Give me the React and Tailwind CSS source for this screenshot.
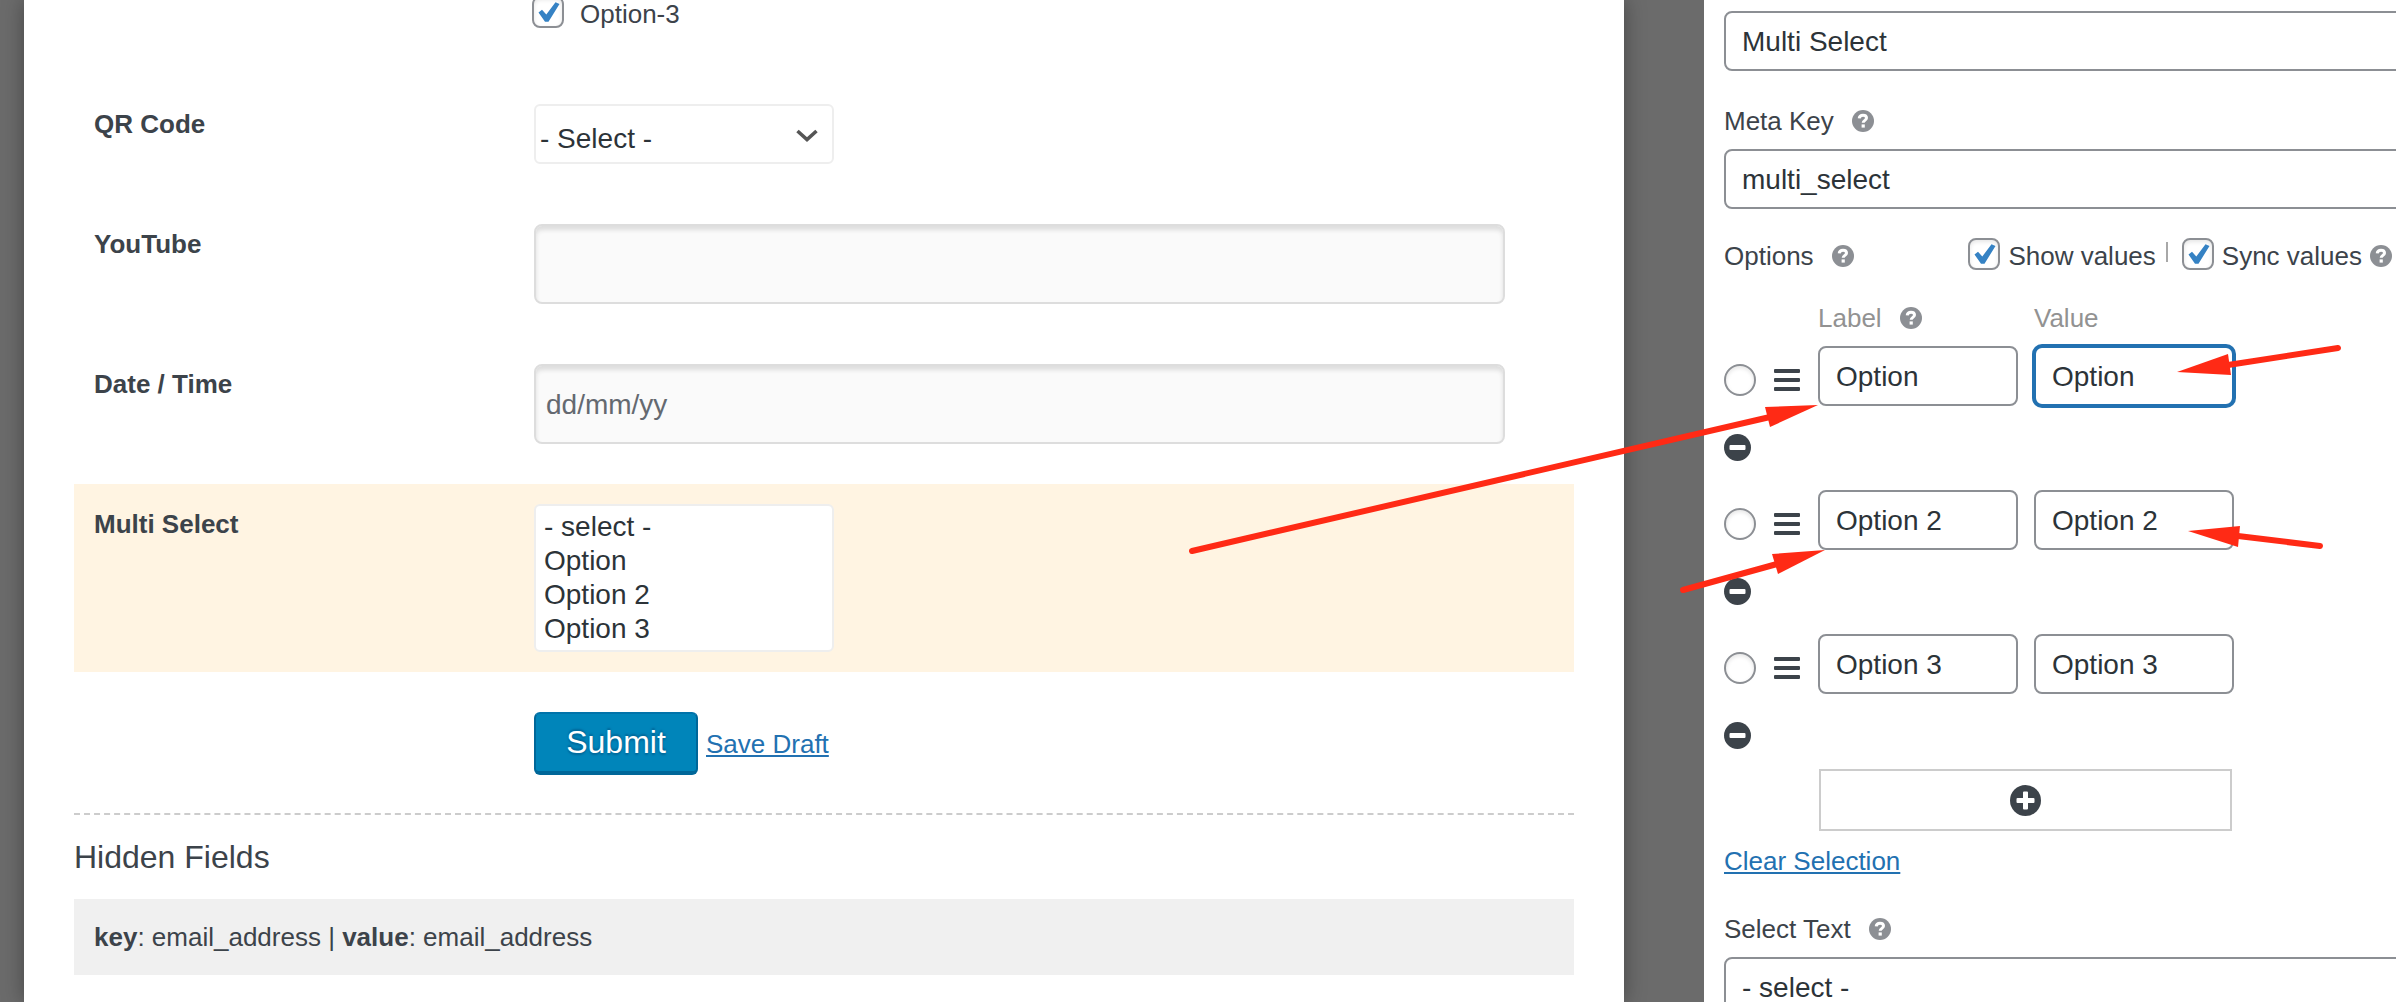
const text = 'text-[26px] leading-8 text-[#3c434a]';
const box = 'h-[60px] rounded-lg border-2 bg-white px-4 pt-0.5 text-[28px] text-[#2c3338]';

function HelpIcon() {
  return (
    <svg viewBox="0 0 22 22" className="h-[22px] w-[22px] shrink-0" fill="none">
      <circle cx="11" cy="11" r="11" fill="#8c8f94" />
      <path d="M7.2 8.4C7.4 6.4 8.8 5.2 11 5.2s3.500 1.200 3.500 2.900c0 2.300-3.300 2.300-3.300 4.700" stroke="#fff" strokeWidth="3" />
      <rect x="9.600" y="14.400" width="3.200" height="3.200" fill="#fff" />
    </svg>
  );
}

function Tick({ id }) {
  return (
    <span className="relative block h-8 w-8 shrink-0">
      <input
        id={id}
        type="checkbox"
        defaultChecked
        className="block h-8 w-8 appearance-none rounded-lg border-2 border-[#8c8f94] bg-white shadow-[inset_0_2px_4px_rgba(0,0,0,0.1)]"
      />
      <svg viewBox="0 0 32 32" className="pointer-events-none absolute inset-0" fill="#3582c4">
        <path d="M6.500 16.500 10 13.700 14.300 18.500 23.500 6.300 27.500 8 16.500 25.700H13Z" />
      </svg>
    </span>
  );
}

function Field({ label, id, className = '', children }) {
  return (
    <div className={`flex items-start px-5 py-5 ${className}`}>
      <label htmlFor={id} className="w-[440px] shrink-0 pt-1 text-[26px] leading-8 font-bold text-[#3c434a]">
        {label}
      </label>
      <div className="min-w-0 flex-1">{children}</div>
    </div>
  );
}

const plain =
  'block h-20 w-[971px] max-w-full rounded-lg border-2 border-[#ddd] bg-[#fafafa] px-2.5 pt-0.5 text-[28px] text-[#2c3338] placeholder:text-[#646970] shadow-[inset_0_4px_4px_#ddd]';

function FormPreview() {
  return (
    <main className="min-w-0 flex-1 bg-white px-[50px] shadow-[0_0_20px_rgba(0,0,0,0.35)]">
      <div className="flex h-7 items-end pl-[458px]">
        <Tick id="option-3" />
        <label htmlFor="option-3" className="pl-4 text-[26px] leading-7 text-[#3c434a]">Option-3</label>
      </div>

      <Field label="QR Code" id="qr" className="mt-14">
        <span className="relative block w-[300px]">
          <select
            id="qr"
            className="block h-[60px] w-full appearance-none rounded-md border-2 border-[#eee] bg-white px-1 pt-2.5 text-[28px] text-[#2c3338]"
          >
            <option>- Select -</option>
          </select>
          <svg viewBox="0 0 22 14" className="pointer-events-none absolute top-[25px] right-4 h-3.5 w-[22px]" fill="none" stroke="#555" strokeWidth="3.600">
            <path d="M1.500 2 11 10.500 20.500 2" />
          </svg>
        </span>
      </Field>
      <Field label="YouTube" id="youtube" className="mt-5">
        <input id="youtube" type="text" className={plain} />
      </Field>
      <Field label="Date / Time" id="date" className="mt-5">
        <input id="date" type="text" placeholder="dd/mm/yy" className={plain} />
      </Field>
      <Field label="Multi Select" id="multi" className="mt-5 bg-[#fff4e2]">
        <select
          id="multi"
          multiple
          size={4}
          className="block h-[148px] w-[300px] overflow-hidden rounded-md border-2 border-[#eee] bg-white px-2 pt-[5px] text-[28px] leading-8 text-[#2c3338]"
        >
          <option className="h-[34px]">- select -</option>
          <option className="h-[34px]">Option</option>
          <option className="h-[34px]">Option 2</option>
          <option className="h-[34px]">Option 3</option>
        </select>
      </Field>

      <div className="flex items-center gap-2 pt-10 pb-[38px] pl-[460px]">
        <button
          type="button"
          className="h-[63px] w-[164px] rounded-md border-2 border-b-4 border-[#006799] border-t-[#0073aa] bg-[#0085ba] pb-0.5 text-[32px] text-white [text-shadow:0_-2px_2px_#006799,0_2px_2px_#006799]"
        >
          Submit
        </button>
        <a href="#draft" className="text-[26px] leading-8 text-[#2271b1] underline decoration-2 underline-offset-2">Save Draft</a>
      </div>

      <section className="border-t-2 border-dashed border-[#ccc]">
        <h2 className="pt-6 text-[32px] leading-9 text-[#3c434a]">Hidden Fields</h2>
        <p className="mt-6 mb-10 bg-[#f0f0f0] px-5 py-[22px] text-[26px] leading-8 text-[#3c434a]">
          <b>key</b>: email_address | <b>value</b>: email_address
        </p>
      </section>
    </main>
  );
}

function OptionRow({ name, focused }) {
  return (
    <div className="mb-[29px]">
      <div className="flex items-center">
        <input
          type="radio"
          name="default"
          aria-label={`Default ${name}`}
          className="mt-2 h-8 w-8 appearance-none rounded-full border-2 border-[#8c8f94] bg-white shadow-[inset_0_2px_4px_rgba(0,0,0,0.1)]"
        />
        <svg viewBox="0 0 26 22" className="mt-2 ml-[18px] h-[22px] w-[26px]" fill="#3c434a">
          <rect width="26" height="4" rx="1" />
          <rect y="9" width="26" height="4" rx="1" />
          <rect y="18" width="26" height="4" rx="1" />
        </svg>
        <input aria-label={`${name} label`} defaultValue={name} className={`ml-[18px] w-[200px] border-[#8c8f94] ${box}`} />
        <input
          aria-label={`${name} value`}
          defaultValue={name}
          className={`ml-4 w-[200px] ${box} ${focused ? 'border-[#2271b1] ring-2 ring-[#2271b1]' : 'border-[#8c8f94]'}`}
        />
      </div>
      <button type="button" aria-label={`Remove ${name}`} className="mt-7 block">
        <svg viewBox="0 0 27 27" className="h-[27px] w-[27px]">
          <circle cx="13.500" cy="13.500" r="13.500" fill="#3c434a" />
          <rect x="5.500" y="11" width="16" height="5" rx="1" fill="#fff" />
        </svg>
      </button>
    </div>
  );
}

function FieldSettings() {
  return (
    <aside className="w-[692px] shrink-0 overflow-hidden bg-white pl-5">
      <div className="-mr-10 pt-[11px]">
        <input aria-label="Label" defaultValue="Multi Select" className={`block w-full border-[#8c8f94] ${box}`} />

        <div className="mt-[34px] mb-3 flex items-center gap-[18px]">
          <label htmlFor="meta" className={text}>Meta Key</label>
          <HelpIcon />
        </div>
        <input id="meta" defaultValue="multi_select" className={`block w-full border-[#8c8f94] ${box}`} />
      </div>

      <div className="mt-[27px] flex items-center">
        <span className={`mt-1 ${text}`}>Options</span>
        <span className="mt-1 ml-[18px]"><HelpIcon /></span>
        <div className="ml-auto flex items-center pr-1">
          <Tick id="show" />
          <label htmlFor="show" className={`ml-2 pt-1 ${text}`}>Show values</label>
          <span className="mr-3.5 mb-1 ml-2.5 h-5 w-0.5 bg-[#a8a8a8]" />
          <Tick id="sync" />
          <label htmlFor="sync" className={`ml-2 pt-1 ${text}`}>Sync values</label>
          <span className="ml-2 pt-1"><HelpIcon /></span>
        </div>
      </div>

      <div className="mt-[30px] mb-3 flex h-8 items-center pl-[94px] text-[26px] leading-8 text-[#929292]">
        <div className="flex w-[216px] items-center gap-[18px]">
          Label <HelpIcon />
        </div>
        <div>Value</div>
      </div>

      <OptionRow name="Option" focused />
      <OptionRow name="Option 2" />
      <OptionRow name="Option 3" />

      <button
        type="button"
        aria-label="Add option"
        className="-mt-[9px] ml-[95px] flex h-[62px] w-[413px] items-center justify-center border-2 border-[#ccc]"
      >
        <svg viewBox="0 0 31 31" className="h-[31px] w-[31px]">
          <circle cx="15.500" cy="15.500" r="15.500" fill="#3c434a" />
          <path d="M13 7.500q0-1 1-1h3q1 0 1 1V13h5.500q1 0 1 1v3q0 1-1 1H18v5.500q0 1-1 1h-3q-1 0-1-1V18H7.500q-1 0-1-1v-3q0-1 1-1H13Z" fill="#fff" />
        </svg>
      </button>
      <a href="#clear" className="mt-3.5 block w-fit text-[26px] leading-8 text-[#2271b1] underline decoration-2 underline-offset-2">
        Clear Selection
      </a>

      <div className="mt-9 mb-3 flex items-center gap-[18px]">
        <label htmlFor="select-text" className={text}>Select Text</label>
        <HelpIcon />
      </div>
      <div className="-mr-10">
        <input id="select-text" defaultValue="- select -" className={`block w-full border-[#8c8f94] ${box}`} />
      </div>
    </aside>
  );
}

// Red pointer arrows drawn over both panels, anchored to the settings side
function Arrows() {
  return (
    <svg
      viewBox="0 0 1216 610"
      className="pointer-events-none absolute top-0 right-0 h-[610px] w-[1216px]"
      fill="#ff2a15"
      stroke="#ff2a15"
      strokeWidth="6"
      strokeLinecap="round"
    >
      <g transform="translate(-1180)">
        <path d="M1192 551 1770 417M1683 590 1777 564M2338 348 2228 365M2320 546 2238 536" />
        <g stroke="none">
          <path d="M1818 405 1765 407 1770 427Z" />
          <path d="M1825 550 1772 554 1778 574Z" />
          <path d="M2177 372 2228 354 2231 375Z" />
          <path d="M2188 531 2240 526 2238 547Z" />
        </g>
      </g>
    </svg>
  );
}

export default function App() {
  return (
    <div className="relative flex h-screen gap-20 overflow-hidden bg-[#6b6b6b] pl-6 font-['Liberation_Sans',Arial,sans-serif]">
      <FormPreview />
      <FieldSettings />
      <Arrows />
    </div>
  );
}
